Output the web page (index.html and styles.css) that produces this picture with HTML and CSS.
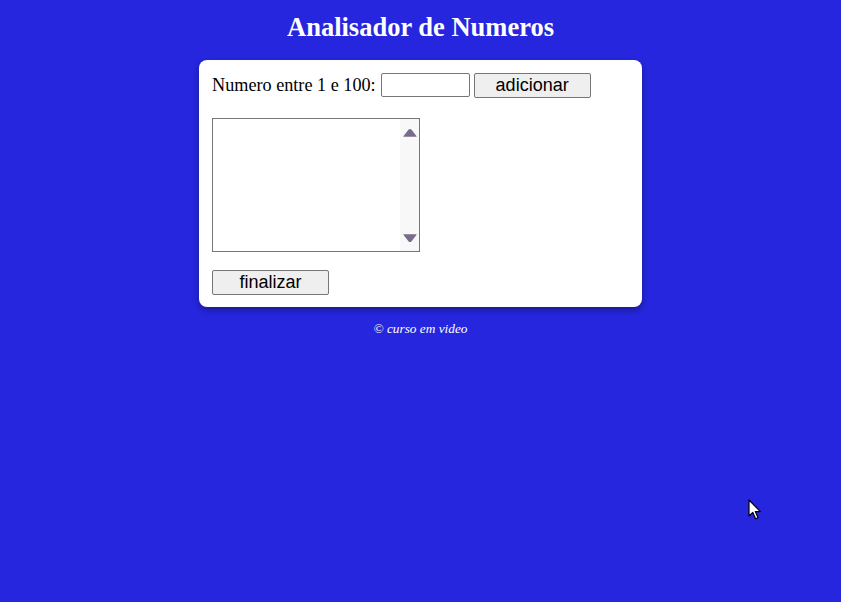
FILE: index.html
```html
<!DOCTYPE html>
<html lang="pt">
<head>
<meta charset="utf-8">
<title>Analisador de Numeros</title>
<link rel="stylesheet" href="styles.css">
</head>
<body>
<header class="top">
  <h1 class="title">Analisador de Numeros</h1>
</header>
<section class="card">
  <div class="row">
    <label class="label" for="num">Numero entre 1 e 100:</label>
    <input class="field" type="text" id="num">
    <button class="btn" type="button">adicionar</button>
  </div>
  <div class="list">
    <div class="list-body"></div>
    <div class="scroll">
      <svg class="arrow" width="14" height="8" viewBox="0 0 14 8"><path d="M5.6 0.6 Q7 -0.4 8.4 0.6 L13.6 7.2 Q13.8 7.8 13 7.8 L1 7.8 Q0.2 7.8 0.4 7.2 Z" fill="#7a6a8b"/></svg>
      <svg class="arrow" width="14" height="8" viewBox="0 0 14 8"><path d="M1 0.2 L13 0.2 Q13.8 0.2 13.6 0.8 L8.4 7.4 Q7 8.4 5.6 7.4 L0.4 0.8 Q0.2 0.2 1 0.2 Z" fill="#7a6a8b"/></svg>
    </div>
  </div>
  <div class="row-end">
    <button class="btn" type="button">finalizar</button>
  </div>
</section>
<footer class="foot">&copy; curso em video</footer>
<svg class="cursor" width="14" height="22" viewBox="0 0 14 22"><path d="M1 1 L1 17 L4.8 13.4 L7.6 19.8 L10 18.8 L7.3 12.6 L12.4 12.6 Z" fill="#fff" stroke="#000" stroke-width="1.2" stroke-linejoin="round"/></svg>
</body>
</html>
```
FILE: styles.css
```css
html, body {
  margin: 0;
  padding: 0;
}
body {
  background: #2626de;
  font-family: "Liberation Serif", "Times New Roman", serif;
  color: #000;
  min-height: 602px;
  position: relative;
}
.top {
  padding-top: 12px;
}
.title {
  margin: 0;
  font-size: 26.5px;
  line-height: 30px;
  font-weight: bold;
  text-align: center;
  color: #fff;
}
.card {
  box-sizing: border-box;
  width: 443px;
  margin: 18px auto 0;
  background: #fff;
  border-radius: 8px;
  box-shadow: 0 3px 6px rgba(0, 0, 0, 0.35);
  padding: 12px 13px 12px;
  display: flex;
  flex-direction: column;
  align-items: flex-start;
}
.row {
  display: flex;
  align-items: center;
  height: 26px;
}
.label {
  font-size: 18.2px;
  margin-right: 5px;
}
.field {
  box-sizing: border-box;
  width: 89px;
  height: 24px;
  border: 1px solid #767676;
  border-radius: 2px;
  padding: 0 2px;
  margin: 0 4px 0 0;
  background: #fff;
}
.btn {
  box-sizing: border-box;
  width: 117px;
  height: 25px;
  padding: 0;
  margin: 0;
  border: 1px solid #767676;
  border-radius: 2px;
  background: #efefef;
  font-family: "Liberation Sans", Arial, sans-serif;
  font-size: 18px;
  line-height: 23px;
  color: #000;
}
.list {
  box-sizing: border-box;
  margin-top: 20px;
  width: 208px;
  height: 134px;
  border: 1px solid #767676;
  display: flex;
  background: #fff;
}
.list-body {
  flex: 1;
}
.scroll {
  width: 19px;
  background: #f8f8f8;
  display: flex;
  flex-direction: column;
  justify-content: space-between;
  align-items: center;
  padding: 10px 0 9px;
}
.arrow {
  display: block;
}
.row-end {
  margin-top: 18px;
}
.foot {
  margin-top: 14px;
  text-align: center;
  font-style: italic;
  font-size: 13.3px;
  line-height: 16px;
  color: #fff;
}
.cursor {
  position: absolute;
  left: 748px;
  top: 499px;
}
```
